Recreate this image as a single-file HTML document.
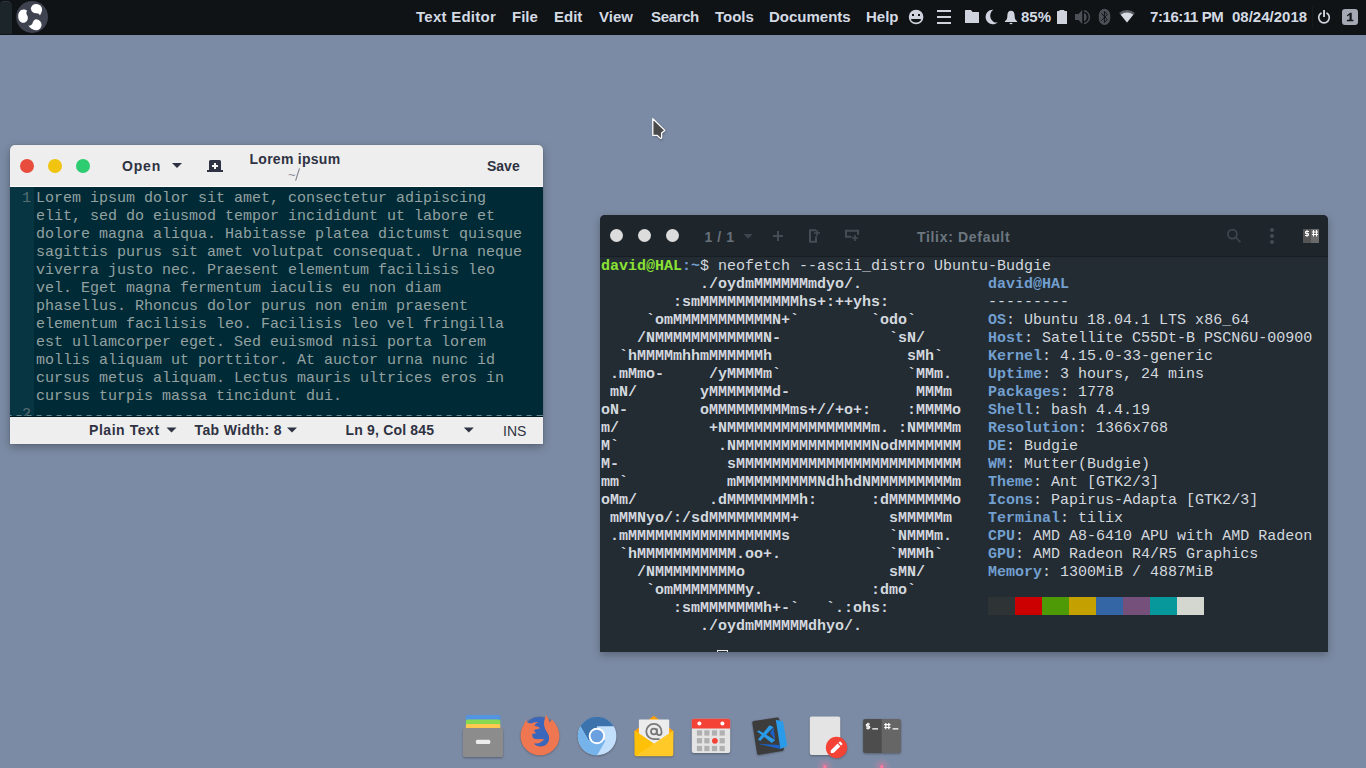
<!DOCTYPE html>
<html>
<head>
<meta charset="utf-8">
<title>Desktop</title>
<style>
*{box-sizing:border-box;margin:0;padding:0}
html,body{width:1366px;height:768px;overflow:hidden}
body{background:#7c8ba5;font-family:"Liberation Sans",sans-serif;position:relative}
.abs{position:absolute}
/* ---------- top bar ---------- */
#bar{position:absolute;left:0;top:0;width:1366px;height:35px;background:#0f1316}
#bar .tab{position:absolute;left:0;top:1px;width:12px;height:33px;background:#1b252a;border-radius:4px 5px 0 0;border-top:1px solid #2a363b}
#bar .mi{position:absolute;top:8px;height:18px;line-height:18px;font-size:15px;font-weight:bold;color:#d4dae3;white-space:nowrap}
/* ---------- gedit ---------- */
#gedit{position:absolute;left:10px;top:145px;width:533px;height:299px;background:#eee;border-radius:5px 5px 0 0;box-shadow:0 3px 10px rgba(0,0,0,.3),0 0 0 1px rgba(0,0,0,.04)}
#gedit .dot{position:absolute;top:14px;width:14px;height:14px;border-radius:50%}
#gedit .hb{position:absolute;font-weight:bold;font-size:14px;color:#2e3242;white-space:nowrap;line-height:16px}
#gedit .ed{position:absolute;left:0;top:41px;width:533px;height:231px;background:#002b36;overflow:hidden;border-top:1px solid #fff}
#gedit .gut{position:absolute;left:0;top:0;width:24px;height:230px;background:#073642}
#gedit pre{position:absolute;left:26px;top:3px;font-family:"Liberation Mono",monospace;font-size:15px;line-height:18px;color:#93a1a1}
#gedit .ln{position:absolute;left:0;width:21px;text-align:right;font-family:"Liberation Mono",monospace;font-size:15px;line-height:18px;color:#586e75}
#gedit .sb{position:absolute;left:0;top:272px;width:533px;height:27px;background:#eee}
/* ---------- tilix ---------- */
#tilix{position:absolute;left:600px;top:215px;width:728px;height:437px;background:#232c33;border-radius:5px 5px 0 0;overflow:hidden;box-shadow:0 3px 9px rgba(0,0,0,.28)}
#tilix .hd{position:absolute;left:0;top:0;width:728px;height:42px;background:#1e252b;border-bottom:1px solid #171d22}
#tilix .dot{position:absolute;top:14.300px;width:13px;height:13px;border-radius:50%;background:#dcdcdc}
#tilix pre{position:absolute;left:1px;top:43px;font-family:"Liberation Mono",monospace;font-size:15px;line-height:18px;color:#d3d8df;white-space:pre}
#tilix b{font-weight:bold}
#tilix .th{font-weight:bold;font-size:14px;line-height:16px;white-space:nowrap}
.g{color:#8ae234}.bl{color:#729fcf}
</style>
</head>
<body>

<div id="bar">
  <div class="tab"></div>
  <div class="abs" style="left:1312px;top:6px;width:1px;height:22px;background:rgba(255,255,255,.035)"></div>

  <svg class="abs" style="left:0;top:0" width="1366" height="35" viewBox="0 0 1366 35">
    <!-- budgie logo -->
    <circle cx="32.1" cy="17" r="15.9" fill="#3f4350"/>
    <g fill="#fff">
      <path d="M36.4 3.9a5.6 5.6 0 0 1 5.7 5.4c0 2.2-1.1 4.6-2.2 6.2-.4-1.3-1.6-2.2-3.4-2.2a5.6 5.6 0 0 1-5.7-4.7 5.6 5.6 0 0 1 5.6-4.7z"/>
      <path d="M23.400 9.600c1.400 0 2.800.400 3.800 1.200-1.100 1.300-1.100 2.800-.200 4.300 1.800 2.800.800 6.200-2 7.400-3.600 1.400-6.800-1.600-6.800-6.200 0-3.800 2.200-6.700 5.200-6.700z"/>
      <path d="M36.200 19.300a5.600 5.600 0 0 1 5.400 5.400 5.600 5.600 0 0 1-5.600 5.600c-3.200 0-6.200-2-7.600-4.700 1.500.3 3-.3 3.900-1.900.9-2.600 2.100-4.400 3.900-4.400z"/>
    </g>
    <g fill="#cfd3de">
      <!-- smiley -->
      <path fill-rule="evenodd" d="M916.1 9.700a7.300 7.300 0 1 0 0 14.600 7.300 7.300 0 0 0 0-14.600zM912 14h2v2h-2zM918 14h2v2h-2zM911 19h10a5 3.600 0 0 1-10 0z"/>
      <!-- hamburger -->
      <rect x="937" y="10" width="14" height="2"/><rect x="937" y="16" width="14" height="2"/><rect x="937" y="22" width="14" height="2"/>
      <!-- folder -->
      <path d="M965.500 10h5.500l1.500 2h6a.5.5 0 0 1 .5.500v10a.5.5 0 0 1-.5.500h-13a.5.5 0 0 1-.5-.5v-12a.5.500 0 0 1 .5-.5z"/>
      <!-- moon -->
      <path d="M993.400 9.700a7.300 7.300 0 1 0 4.600 12.500 6 6.800 0 0 1-4.600-12.500z"/>
      <!-- bell -->
      <path d="M1011 10.800c-2.400 0-3.600 2-3.600 4.400 0 3.400-.9 5-2.500 6.000v.8h12.200v-.8c-1.600-1-2.500-2.600-2.500-6 0-2.400-1.200-4.400-3.600-4.400z"/>
      <ellipse cx="1011" cy="23.500" rx="1.500" ry=".8"/>
      <!-- battery -->
      <path d="M1059.500 10h4.800v1h2.200a.5.500 0 0 1 .5.500v12a.5.500 0 0 1-.5.500h-9a.5.500 0 0 1-.5-.5v-12a.5.500 0 0 1 .5-.5h2z"/>
    </g>
    <g fill="#4d5057">
      <!-- speaker -->
      <path d="M1075 14h3.500l3.700-4v14l-3.700-4h-3.500z"/>
      <path d="M1084 12.800a4.600 4.600 0 0 1 0 8.400z"/>
      <path d="M1084 9.900a7.300 7.300 0 0 1 0 14.400v-1.600a5.700 5.700 0 0 0 0-11.200z"/>
      <!-- bluetooth -->
      <rect x="1098.800" y="8.800" width="11.400" height="16.200" rx="5.700" ry="6.500"/>
    </g>
    <path d="M1101.300 13.300l6 6.200-2.900 3v-11l2.900 3-6 6.200" fill="none" stroke="#0f1316" stroke-width="1"/>
    <!-- wifi -->
    <path d="M1127 22.400l-7.900-9.500a12.300 12.300 0 0 1 15.800 0z" fill="#5a5d64"/>
    <path d="M1127 22.400l-6.260-7.530a9.800 9.800 0 0 1 12.520 0z" fill="#d7dbe3"/>
    <!-- power -->
    <path d="M1321 13.200a5.300 5.300 0 1 0 6 0" fill="none" stroke="#cfd3de" stroke-width="1.700" stroke-linecap="round"/>
    <rect x="1323.100" y="10" width="1.900" height="7" fill="#cfd3de"/>
    <!-- workspace -->
    <rect x="1342" y="9" width="16" height="16" rx="3" fill="#a4a9b4"/>
    <path d="M1347 15.200l3.300-2.400h1.400v7h1.700v1.400h-6.500v-1.400h2.600v-4.900l-2.500 1.700z" fill="#14171b"/>
  </svg>
  <div class="mi" style="left:416px;letter-spacing:.25px">Text Editor</div>
  <div class="mi" style="left:512px">File</div>
  <div class="mi" style="left:554px">Edit</div>
  <div class="mi" style="left:599px">View</div>
  <div class="mi" style="left:651px;letter-spacing:-.35px">Search</div>
  <div class="mi" style="left:715px">Tools</div>
  <div class="mi" style="left:769px">Documents</div>
  <div class="mi" style="left:866px">Help</div>
  <div class="mi" style="left:1021px">85%</div>
  <div class="mi" style="left:1150px;letter-spacing:-.42px">7:16:11 PM</div>
  <div class="mi" style="left:1232px">08/24/2018</div>
</div>

<div id="gedit">
  <div class="dot" style="left:10px;background:#e74c3c"></div>
  <div class="dot" style="left:38px;background:#f1c40f"></div>
  <div class="dot" style="left:66px;background:#2ecc71"></div>

  <svg class="abs" style="left:0;top:0;z-index:5" width="533" height="299" viewBox="10 145 533 299">
    <g fill="#2e3242">
      <path d="M172 163h10l-5 5z"/>
      <path d="M210.500 160h9a1.500 1.500 0 0 1 1.500 1.500v8.500h2v2h-16v-2h2v-8.500a1.500 1.500 0 0 1 1.500-1.500z"/>
      <path d="M166.500 427.500h10l-5 5z"/>
      <path d="M287 427.500h10l-5 5z"/>
      <path d="M463.800 427.500h10l-5 5z"/>
    </g>
    <path d="M212 166h6M215 163v6" stroke="#f6f6f6" stroke-width="2" fill="none"/>
    <path d="M295.600 180.700L299.500 168.300" stroke="#7d808a" stroke-width="1.100" fill="none"/>
  </svg>
  <div class="abs" style="left:278px;top:22px;font-size:13px;line-height:15px;letter-spacing:.5px;color:#8a8d96">~</div>
  <div class="hb" style="left:112px;top:13px;letter-spacing:.8px">Open</div>
  <div class="hb" style="left:239.500px;top:6px;letter-spacing:.27px">Lorem ipsum</div>
  <div class="hb" style="left:477px;top:13px">Save</div>
  <div class="ed">
    <div class="gut"></div>
    <div class="ln" style="top:3px">1</div>
    <div class="ln" style="top:219px">2</div>
    <div class="abs" style="left:0;top:228px;width:533px;height:1px;background:repeating-linear-gradient(90deg,#64828a 0 5px,transparent 5px 10px);background-position:-3.400px 0;z-index:3"></div>
    <div class="abs" style="left:0;top:229px;width:533px;height:1px;background:#001920;z-index:3"></div>
<pre>Lorem ipsum dolor sit amet, consectetur adipiscing
elit, sed do eiusmod tempor incididunt ut labore et
dolore magna aliqua. Habitasse platea dictumst quisque
sagittis purus sit amet volutpat consequat. Urna neque
viverra justo nec. Praesent elementum facilisis leo
vel. Eget magna fermentum iaculis eu non diam
phasellus. Rhoncus dolor purus non enim praesent
elementum facilisis leo. Facilisis leo vel fringilla
est ullamcorper eget. Sed euismod nisi porta lorem
mollis aliquam ut porttitor. At auctor urna nunc id
cursus metus aliquam. Lectus mauris ultrices eros in
cursus turpis massa tincidunt dui.</pre>
  </div>
  <div class="sb">
    <div class="hb" style="left:79px;top:5px;letter-spacing:.55px">Plain Text</div>
    <div class="hb" style="left:184.500px;top:5px;letter-spacing:.38px">Tab Width: 8</div>
    <div class="hb" style="left:335.500px;top:5px;letter-spacing:.18px">Ln 9, Col 845</div>
    <div class="hb" style="left:493px;top:6px;font-weight:normal">INS</div>
  </div>
</div>

<div id="tilix">
  <div class="hd">
    <div class="dot" style="left:10.400px"></div>
    <div class="dot" style="left:38.400px"></div>
    <div class="dot" style="left:66.400px"></div>

    <svg class="abs" style="left:0;top:0" width="728" height="42" viewBox="600 215 728 42">
      <path d="M743.400 234h9.400l-4.700 4.800z" fill="#3e464d"/>
      <path d="M778 231v10M773 236h10" stroke="#454c53" stroke-width="2" fill="none"/>
      <!-- add right -->
      <path d="M816 230.200h-6v11.600h6v-5.300" stroke="#454c53" stroke-width="2" fill="none"/>
      <path d="M817 230v6M814 233h6" stroke="#454c53" stroke-width="1.600" fill="none"/>
      <!-- add down -->
      <path d="M851.500 236.800h-5.500v-6h12v4" stroke="#454c53" stroke-width="2" fill="none"/>
      <path d="M855 235v6M852 238h6" stroke="#454c53" stroke-width="1.600" fill="none"/>
      <!-- search -->
      <circle cx="1232.400" cy="234.100" r="4.500" fill="none" stroke="#3f474e" stroke-width="1.700"/>
      <path d="M1235.800 237.500l4.600 4.700" stroke="#3f474e" stroke-width="1.700" fill="none"/>
      <!-- dots -->
      <g fill="#454c53"><circle cx="1272" cy="230" r="2"/><circle cx="1272" cy="236" r="2"/><circle cx="1272" cy="242" r="2"/></g>
      <!-- tilix icon -->
      <rect x="1303" y="229" width="8" height="14" fill="#555"/>
      <rect x="1311" y="229" width="8" height="14" fill="#6a6a6a"/>
      <g stroke="#fff" stroke-width="1" fill="none">
        <path d="M1309 231.500h-3.500v2h3v2h-3.500M1307 230v7"/>
        <path d="M1313.500 230v6.500M1316.500 230v6.500M1312 232h6M1312 234.500h6"/>
      </g>
    </svg>
    <div class="abs th" style="left:104.500px;top:13.500px;letter-spacing:.55px;color:#66717a">1 / 1</div>
    <div class="abs th" style="left:317px;top:13.500px;letter-spacing:.68px;color:#6d7780">Tilix: Default</div>
  </div>
<pre><b class="g">david@HAL</b><b class="bl">:~</b>$ neofetch --ascii_distro Ubuntu-Budgie
<b>           ./oydmMMMMMMmdyo/.              </b><b class="bl">david@HAL</b>
<b>        :smMMMMMMMMMMMhs+:++yhs:           </b>---------
<b>     `omMMMMMMMMMMMN+`        `odo`        </b><b class="bl">OS</b>: Ubuntu 18.04.1 LTS x86_64
<b>    /NMMMMMMMMMMMMN-            `sN/       </b><b class="bl">Host</b>: Satellite C55Dt-B PSCN6U-00900
<b>  `hMMMMmhhmMMMMMMh               sMh`     </b><b class="bl">Kernel</b>: 4.15.0-33-generic
<b> .mMmo-     /yMMMMm`              `MMm.    </b><b class="bl">Uptime</b>: 3 hours, 24 mins
<b> mN/       yMMMMMMMd-              MMMm    </b><b class="bl">Packages</b>: 1778
<b>oN-        oMMMMMMMMMms+//+o+:    :MMMMo   </b><b class="bl">Shell</b>: bash 4.4.19
<b>m/          +NMMMMMMMMMMMMMMMMm. :NMMMMm   </b><b class="bl">Resolution</b>: 1366x768
<b>M`           .NMMMMMMMMMMMMMMMNodMMMMMMM   </b><b class="bl">DE</b>: Budgie
<b>M-            sMMMMMMMMMMMMMMMMMMMMMMMMM   </b><b class="bl">WM</b>: Mutter(Budgie)
<b>mm`           mMMMMMMMMMNdhhdNMMMMMMMMMm   </b><b class="bl">Theme</b>: Ant [GTK2/3]
<b>oMm/        .dMMMMMMMMh:      :dMMMMMMMo   </b><b class="bl">Icons</b>: Papirus-Adapta [GTK2/3]
<b> mMMNyo/:/sdMMMMMMMMM+          sMMMMMm    </b><b class="bl">Terminal</b>: tilix
<b> .mMMMMMMMMMMMMMMMMMs           `NMMMm.    </b><b class="bl">CPU</b>: AMD A8-6410 APU with AMD Radeon
<b>  `hMMMMMMMMMMM.oo+.            `MMMh`     </b><b class="bl">GPU</b>: AMD Radeon R4/R5 Graphics
<b>    /NMMMMMMMMMo                sMN/       </b><b class="bl">Memory</b>: 1300MiB / 4887MiB
<b>     `omMMMMMMMMy.            :dmo`</b>
<b>        :smMMMMMMMh+-`   `.:ohs:</b>
<b>           ./oydmMMMMMMdhyo/.</b>
</pre>

  <div class="abs" style="left:388px;top:382px;width:216px;height:18px;background:linear-gradient(90deg,#2e3436 0 27px,#cc0000 27px 54px,#4e9a06 54px 81px,#c4a000 81px 108px,#3465a4 108px 135px,#75507b 135px 162px,#06989a 162px 189px,#d3d7cf 189px 216px)"></div>
  <div class="abs" style="left:117px;top:435px;width:11px;height:6px;border:1px solid #e8e8e8"></div>
</div>

<svg class="abs" style="left:440px;top:700px" width="490" height="68" viewBox="440 700 490 68">
  <defs>
    <filter id="sh" x="-20%" y="-20%" width="140%" height="150%"><feGaussianBlur stdDeviation="1.1"/></filter>
    <radialGradient id="glow"><stop offset="0" stop-color="#ff6a92" stop-opacity=".55"/><stop offset=".4" stop-color="#f07a9c" stop-opacity=".26"/><stop offset="1" stop-color="#e080a0" stop-opacity="0"/></radialGradient>
  </defs>
  <!-- shadows -->
  <g fill="#000" opacity=".32" filter="url(#sh)">
    <rect x="463" y="729" width="40" height="29" rx="2"/>
    <circle cx="539.900" cy="736.600" r="19.300"/>
    <circle cx="597.100" cy="736.800" r="19.300"/>
    <rect x="634.700" y="731" width="38.600" height="26" rx="2"/>
    <rect x="691.800" y="719.500" width="38.400" height="34.400" rx="2"/>
    <path d="M752.100 722l26.700-4.300 5.100 33.200-26.300 5.100z"/>
    <rect x="809.800" y="717.400" width="30.500" height="38.500" rx="2"/>
    <circle cx="836.600" cy="748.400" r="10.500"/>
    <rect x="863.100" y="719.700" width="37.800" height="34.200" rx="2"/>
  </g>
  <!-- files -->
  <rect x="465.900" y="714.900" width="34.400" height="8" rx="1.500" fill="#5294e2"/>
  <rect x="465.900" y="719.500" width="34.400" height="7" rx="1.500" fill="#87d952"/>
  <rect x="465.900" y="724" width="34.400" height="6" rx="1.500" fill="#ffc84f"/>
  <rect x="462.900" y="728.100" width="40.200" height="28.900" rx="2" fill="#8c8c8c"/>
  <rect x="475.900" y="739.700" width="14.400" height="4.300" rx="1.500" fill="#ececec"/>
  <!-- firefox -->
  <g transform="translate(516 712)">
    <circle cx="23" cy="19.800" r="14.800" fill="#3a66bb"/>
    <path fill="#ee7752" d="M10.200 6.700C9.500 9.500 8.600 11 7.600 13 5.600 16.400 4.600 20 4.600 24 4.600 34.600 13.300 43.300 24 43.300S43.400 34.600 43.400 24C43.400 17.500 40.500 12 35.600 7.200 35.300 8.600 34.700 9.600 33.700 10.400 33 7.500 31.800 5 30.100 2.900 29.300 5.500 28 8.200 28 11.500 28 15.500 30 18.500 31.800 21.500 34.500 26 33 31.500 28.500 33.800 24.500 35.500 20 34.300 17.800 31.300 20.300 31.900 22.600 31.500 24.200 30.600 25.800 29.700 27 28.300 28.500 27.700 26 26.300 22.300 27.700 19.500 27.100 17 26.500 15.900 24.500 16.200 22.700 16.700 21.300 18.300 21.300 19.700 21.700 19.500 20.300 18.700 19.200 17.700 18.600 19.500 17.300 22.300 17 23.900 16.500 23 15 21.700 14.200 20 14.200 18.800 14.200 18.300 13.500 18.900 12.700 19.800 11.600 21.200 10.700 22.500 10.100 19.700 9.600 17 10.500 15.300 11.500 13.600 11.300 12.200 11 11.300 10.600 10.600 9.500 10.300 8.200 10.200 6.700Z"/>
  </g>
  <!-- chromium -->
  <circle cx="597.1" cy="736.0" r="19.3" fill="#c2e0fc"/>
  <path d="M580.39 726.35A19.3 19.3 0 0 1 613.81 726.35L597.10 726.35L597.1 736.0L588.74 740.83Z" fill="#3c73ad"/>
  <path d="M597.10 755.30A19.3 19.3 0 0 1 580.39 726.35L588.74 740.83L597.1 736.0L605.46 740.83Z" fill="#76b3ea"/>
  <circle cx="596.900" cy="736" r="8.200" fill="#fff"/>
  <circle cx="596.900" cy="736" r="6.300" fill="#6a9fe0"/>
  <!-- mail -->
  <g transform="translate(630 712)">
    <path d="M4.700 19L23.800 3.800 43.300 19v8H4.700z" fill="#ffa000"/>
    <rect x="8.900" y="7.600" width="30.300" height="27" rx="1" fill="#ececec"/>
    <g fill="none" stroke="#787878" stroke-width="1.800"><circle cx="23.900" cy="19.500" r="2.900"/><path d="M26.900 16.500v4.300a2.300 2.300 0 0 0 4.600 0v-1.300a7.600 7.600 0 1 0-7.600 7.600h5.600"/></g>
    <path d="M4.700 18.600L23.900 31.800 43.300 18.600V42.300a2 2 0 0 1-2 2H6.700a2 2 0 0 1-2-2z" fill="#ffca28"/>
    <path d="M4.700 18.600L23.900 31.800 5.500 43.900a2 2 0 0 1-.8-1.600z" fill="#ffc107"/>
  </g>
  <!-- calendar -->
  <g transform="translate(687 712)">
    <rect x="4.800" y="6.700" width="38.400" height="34.400" rx="2" fill="#e4e4e4"/>
    <path d="M6.800 6.700h34.400a2 2 0 0 1 2 2v7.800H4.800V8.700a2 2 0 0 1 2-2z" fill="#f44336"/>
    <circle cx="12.400" cy="11.600" r="2" fill="#fff"/><circle cx="35.400" cy="11.600" r="2" fill="#fff"/>
    <g fill="#b0b0b0">
      <rect x="9.900" y="18.300" width="5.200" height="5.300"/><rect x="17.300" y="18.300" width="5.200" height="5.300"/><rect x="24.900" y="18.300" width="5.200" height="5.300"/><rect x="32.600" y="18.300" width="5.200" height="5.300"/>
      <rect x="9.900" y="26.100" width="5.200" height="5.300"/><rect x="17.300" y="26.100" width="5.200" height="5.300"/><rect x="32.600" y="26.100" width="5.200" height="5.300"/>
      <rect x="9.900" y="33.900" width="5.200" height="5.200"/><rect x="17.300" y="33.900" width="5.200" height="5.200"/><rect x="24.900" y="33.900" width="5.200" height="5.200"/><rect x="32.600" y="33.900" width="5.200" height="5.200"/>
    </g>
    <circle cx="27.900" cy="28.800" r="2.900" fill="#f44336"/>
  </g>
  <!-- vscode -->
  <g transform="translate(745 712)">
    <path d="M8.800 9l23.300-3.400a1.800 1.800 0 0 1 2 1.500l4.700 29.800a1.800 1.800 0 0 1-1.500 2L14 42.700a1.800 1.800 0 0 1-2-1.500L7.300 11a1.800 1.800 0 0 1 1.500-2z" fill="#3c3c3c"/>
    <path d="M13 31.800l21.200 1.100 1.200 4.100z" fill="#1a62c7"/>
    <path d="M30.800 7.700l7.200 1.700 4.300 24.700-6.900 2.900z" fill="#2a9be8"/>
    <path d="M28.500 14.900l-3.400 6 5.100 7.200z" fill="#1a62c7"/>
    <path d="M24.500 13.200l4 1.700-13.200 14-2.300-1.400z" fill="#2a9be8"/>
    <path d="M11.900 19.200l2.300-.6 16 9.500-3.400 2.800z" fill="#2a9be8"/>
  </g>
  <!-- gedit -->
  <rect x="809.800" y="716.600" width="30.500" height="38.500" rx="2" fill="#e4e4e4"/>
  <circle cx="836.500" cy="747.500" r="10.650" fill="#f44336"/>
  <path d="M830.700 750.400L837.600 743.600 840.300 746.400 833.500 753.100 830.800 753.100zM838.400 742.800l1.200-1.100a.7.700 0 0 1 1 0l1.600 1.700a.7.700 0 0 1 0 1l-1.200 1.200z" fill="#fff"/>
  <!-- tilix -->
  <path d="M865.100 718.900h16.700v34.200h-16.700a2 2 0 0 1-2-2v-30.200a2 2 0 0 1 2-2z" fill="#4d4d4d"/>
  <path d="M881.800 718.900h17.100a2 2 0 0 1 2 2v30.200a2 2 0 0 1-2 2h-17.100z" fill="#666"/>
  <g stroke="#fff" fill="none" stroke-width="1.200">
    <path d="M869.800 724.200h-2.500a1 1 0 0 0 0 2h1.500a1 1 0 0 1 0 2h-2.700M868 722.700v6.800M872.300 728.800h5.700"/>
    <path d="M885.800 723v6.300M888.800 723v6.300M884.200 724.700h6.300M884.200 727.500h6.300M892.600 728.800h5.700"/>
  </g>
  <!-- indicators -->
  <circle cx="824.900" cy="766.500" r="9" fill="url(#glow)"/><circle cx="824.900" cy="766.500" r="1.600" fill="#ff7a9e"/>
  <circle cx="881.800" cy="766.500" r="9" fill="url(#glow)"/><circle cx="881.800" cy="766.500" r="1.600" fill="#ff7a9e"/>
</svg>

<!-- mouse cursor -->
<svg class="abs" style="left:648px;top:114px" width="24" height="30" viewBox="648 114 24 30">
  <path d="M653.300 119.500v17.600h4.300l3.200 3.300 1.700-.300v-4.800l3.700-4.200z" fill="#000" opacity=".25" filter="url(#sh)"/>
  <path d="M652.800 118.800v16.500h4.300l3.300 3.100 1.200-.3v-5l3.200-2.700z" fill="#4a4a4a" stroke="#fff" stroke-width="1.300" stroke-linejoin="round"/>
</svg>

</body>
</html>
